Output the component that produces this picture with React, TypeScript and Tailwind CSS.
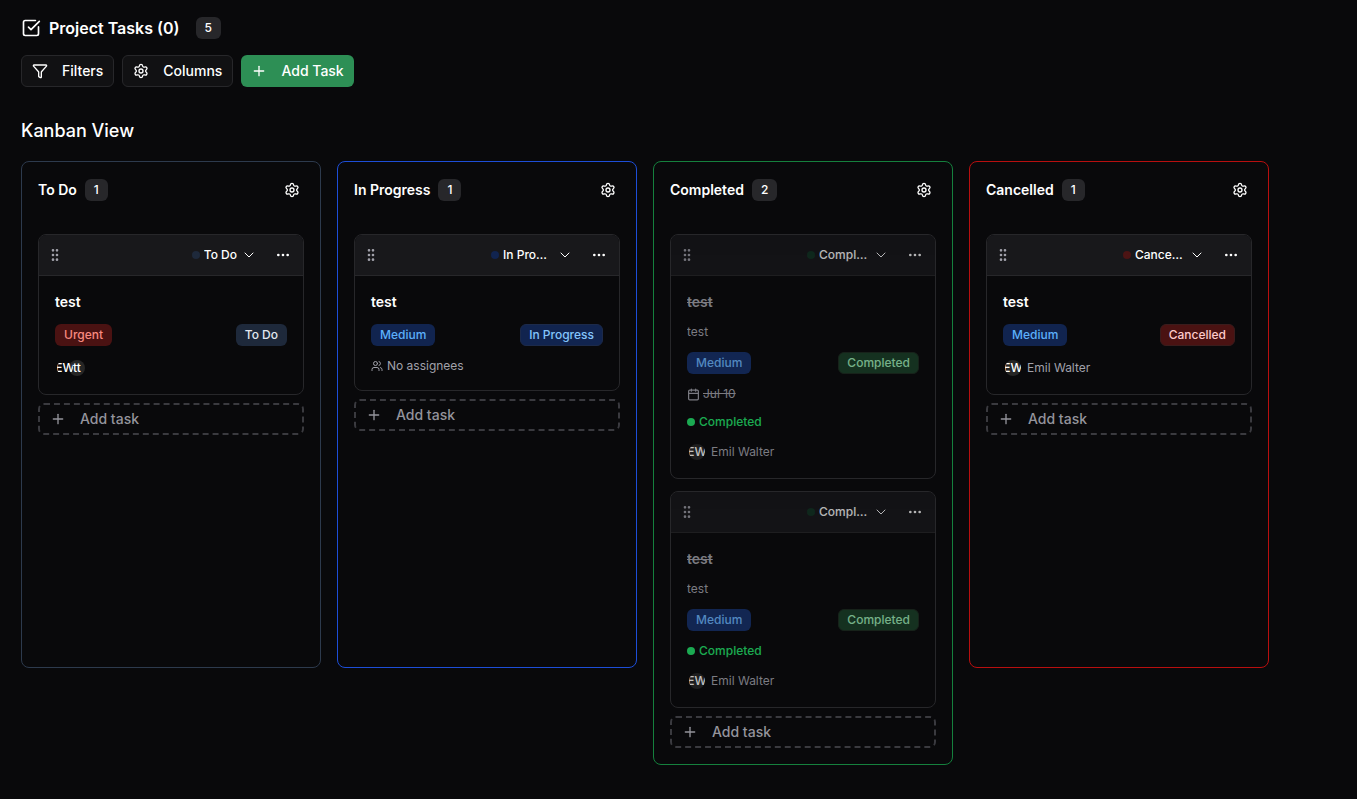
import { SquareCheckBig, Funnel, Settings, Plus, GripVertical, ChevronDown, Ellipsis, Users, Calendar } from "lucide-react";

type Task = {
  status: string;
  dot: string;
  faded?: boolean;
  priority: string;
  priorityCls: string;
  badge: string;
  badgeCls: string;
  desc?: boolean;
  date?: boolean;
  completed?: boolean;
  people: "two" | "none" | "emil";
};

type Col = { name: string; count: number; border: string; tasks: Task[] };

const medium = "px-[9px] bg-[#11244f] text-[#5cb0fb]";
const done: Task = {
  status: "Completed",
  dot: "bg-[#123524]",
  faded: true,
  priority: "Medium",
  priorityCls: "px-[9px] bg-[#15306a] text-[#6cb4fb]",
  badge: "Completed",
  badgeCls: "px-2 bg-[#1a3f28] text-[#9ce8b4] border border-[#1c2b20]",
  desc: true,
  completed: true,
  people: "emil",
};

const columns: Col[] = [
  {
    name: "To Do",
    count: 1,
    border: "border-[#2d3a4d]",
    tasks: [
      {
        status: "To Do",
        dot: "bg-[#1e293b]",
        priority: "Urgent",
        priorityCls: "px-[9px] bg-[#4a1212] text-[#f98a80]",
        badge: "To Do",
        badgeCls: "px-[9px] bg-[#1e293b] text-[#e2e8f0]",
        people: "two",
      },
    ],
  },
  {
    name: "In Progress",
    count: 1,
    border: "border-[#1d4ed8]",
    tasks: [
      {
        status: "In Progress",
        dot: "bg-[#11244f]",
        priority: "Medium",
        priorityCls: medium,
        badge: "In Progress",
        badgeCls: "px-2 bg-[#11244f] text-[#84c4fc] border border-[#1c2a4a]",
        people: "none",
      },
    ],
  },
  {
    name: "Completed",
    count: 2,
    border: "border-[#15803d]",
    tasks: [{ ...done, date: true }, done],
  },
  {
    name: "Cancelled",
    count: 1,
    border: "border-[#b80f0f]",
    tasks: [
      {
        status: "Cancelled",
        dot: "bg-[#4c1414]",
        priority: "Medium",
        priorityCls: medium,
        badge: "Cancelled",
        badgeCls: "px-2 bg-[#4a1212] text-[#fecaca] border border-[#3a1c1c]",
        people: "emil",
      },
    ],
  },
];

function Avatar({ text, className = "" }: { text: string; className?: string }) {
  return (
    <span className={`flex h-4 w-4 shrink-0 items-center justify-center overflow-hidden whitespace-nowrap rounded-full bg-[#262626] text-xs font-medium text-white ${className}`}>
      {text}
    </span>
  );
}

function TaskCard({ task }: { task: Task }) {
  return (
    <div className="overflow-hidden rounded-lg border border-[#27272a] bg-[#09090b]">
      <div className={`flex h-[41px] items-center justify-between border-b border-[#27272a] bg-[#18181b] pl-2 pr-3 ${task.faded ? "opacity-70" : ""}`}>
        <GripVertical className="h-4 w-4 text-[#a1a1aa]" />
        <div className="flex items-center">
          <span className={`mr-1 h-2 w-2 rounded-full ${task.dot}`} />
          <span className="max-w-[50px] truncate text-xs font-medium text-white">{task.status}</span>
          <ChevronDown className="ml-1 h-4 w-4 text-white" strokeWidth={1.5} />
          <Ellipsis className="ml-[18px] h-4 w-4 text-white" />
        </div>
      </div>
      <div className={`flex flex-col gap-3 p-4 ${task.faded ? "opacity-75" : ""}`}>
        <div className={`text-sm leading-5 font-semibold ${task.completed ? "text-[#a1a1aa] line-through" : "text-white"}`}>test</div>
        {task.desc && <div className="text-xs leading-4 text-[#a1a1aa]">test</div>}
        <div className="flex items-center justify-between">
          <span className={`flex h-[22px] items-center rounded-md text-xs font-medium ${task.priorityCls}`}>{task.priority}</span>
          <span className={`flex h-[22px] items-center rounded-md text-xs font-medium ${task.badgeCls}`}>{task.badge}</span>
        </div>
        {task.date && (
          <div className="flex h-4 items-center gap-[3px] text-xs text-[#a1a1aa]">
            <Calendar className="h-[13px] w-[13px]" strokeWidth={2.25} />
            <span className="line-through">Jul 10</span>
          </div>
        )}
        {task.completed && (
          <div className="flex h-4 items-center gap-1 text-xs font-medium text-[#22e06a]">
            <span className="h-2 w-2 rounded-full bg-[#22e06a]" />
            Completed
          </div>
        )}
        {task.people === "two" && (
          <div className="flex h-5 items-center pl-0.5">
            <Avatar text="EW" className="relative z-10 bg-transparent" />
            <Avatar text="tt" className="-ml-1" />
          </div>
        )}
        {task.people === "emil" && (
          <div className="flex h-5 items-center gap-1.5 pl-0.5 text-xs text-[#a1a1aa]">
            <Avatar text="EW" />
            Emil Walter
          </div>
        )}
        {task.people === "none" && (
          <div className="flex h-4 items-center gap-1 text-xs text-[#a1a1aa]">
            <Users className="h-3 w-3" />
            No assignees
          </div>
        )}
      </div>
    </div>
  );
}

function Column({ col }: { col: Col }) {
  return (
    <div className={`min-h-[507px] w-[300px] shrink-0 rounded-lg border bg-[#09090b] px-4 pb-4 ${col.border}`}>
      <div className="flex h-14 items-center justify-between">
        <div className="flex items-center gap-2">
          <span className="text-sm font-semibold text-white">{col.name}</span>
          <span className="flex h-[22px] items-center rounded-md bg-[#27272a] px-[9px] text-xs font-medium text-white">{col.count}</span>
        </div>
        <Settings className="mr-1 h-4 w-4 text-white" />
      </div>
      <div className="mt-4 flex flex-col gap-3">
        {col.tasks.map((t, i) => (
          <TaskCard key={i} task={t} />
        ))}
        <div className="-mt-1 flex h-8 items-center gap-3.5 rounded-md border-2 border-dashed border-[#3a3a3f] px-2.5 text-sm font-medium text-[#94949c]">
          <Plus className="h-4 w-4" />
          Add task
        </div>
      </div>
    </div>
  );
}

export default function App() {
  return (
    <div className="min-h-[799px] bg-[#09090b] pl-[21px] pt-4 font-['Inter',sans-serif]">
      <div className="flex h-6 items-center">
        <SquareCheckBig className="mr-2 h-5 w-5 text-white" />
        <span className="text-base font-semibold text-white">Project Tasks (0)</span>
        <span className="ml-4 flex h-[22px] items-center rounded-md bg-[#27272a] px-[9px] text-xs font-medium text-white">5</span>
      </div>
      <div className="mt-[15px] flex gap-2">
        <button className="flex h-8 items-center gap-3.5 rounded-md border border-[#27272a] bg-[#111113] px-2.5 text-sm font-medium text-white">
          <Funnel className="h-4 w-4" />
          Filters
        </button>
        <button className="flex h-8 items-center gap-3.5 rounded-md border border-[#27272a] bg-[#111113] px-2.5 text-sm font-medium text-white">
          <Settings className="h-4 w-4" />
          Columns
        </button>
        <button className="flex h-8 items-center gap-3.5 rounded-md bg-[#2d8f55] px-2.5 text-sm font-medium text-white">
          <Plus className="h-4 w-4" />
          Add Task
        </button>
      </div>
      <h2 className="mt-[30px] text-lg leading-7 font-medium text-white">Kanban View</h2>
      <div className="mt-4 flex items-start gap-4">
        {columns.map((c) => (
          <Column key={c.name} col={c} />
        ))}
      </div>
    </div>
  );
}
